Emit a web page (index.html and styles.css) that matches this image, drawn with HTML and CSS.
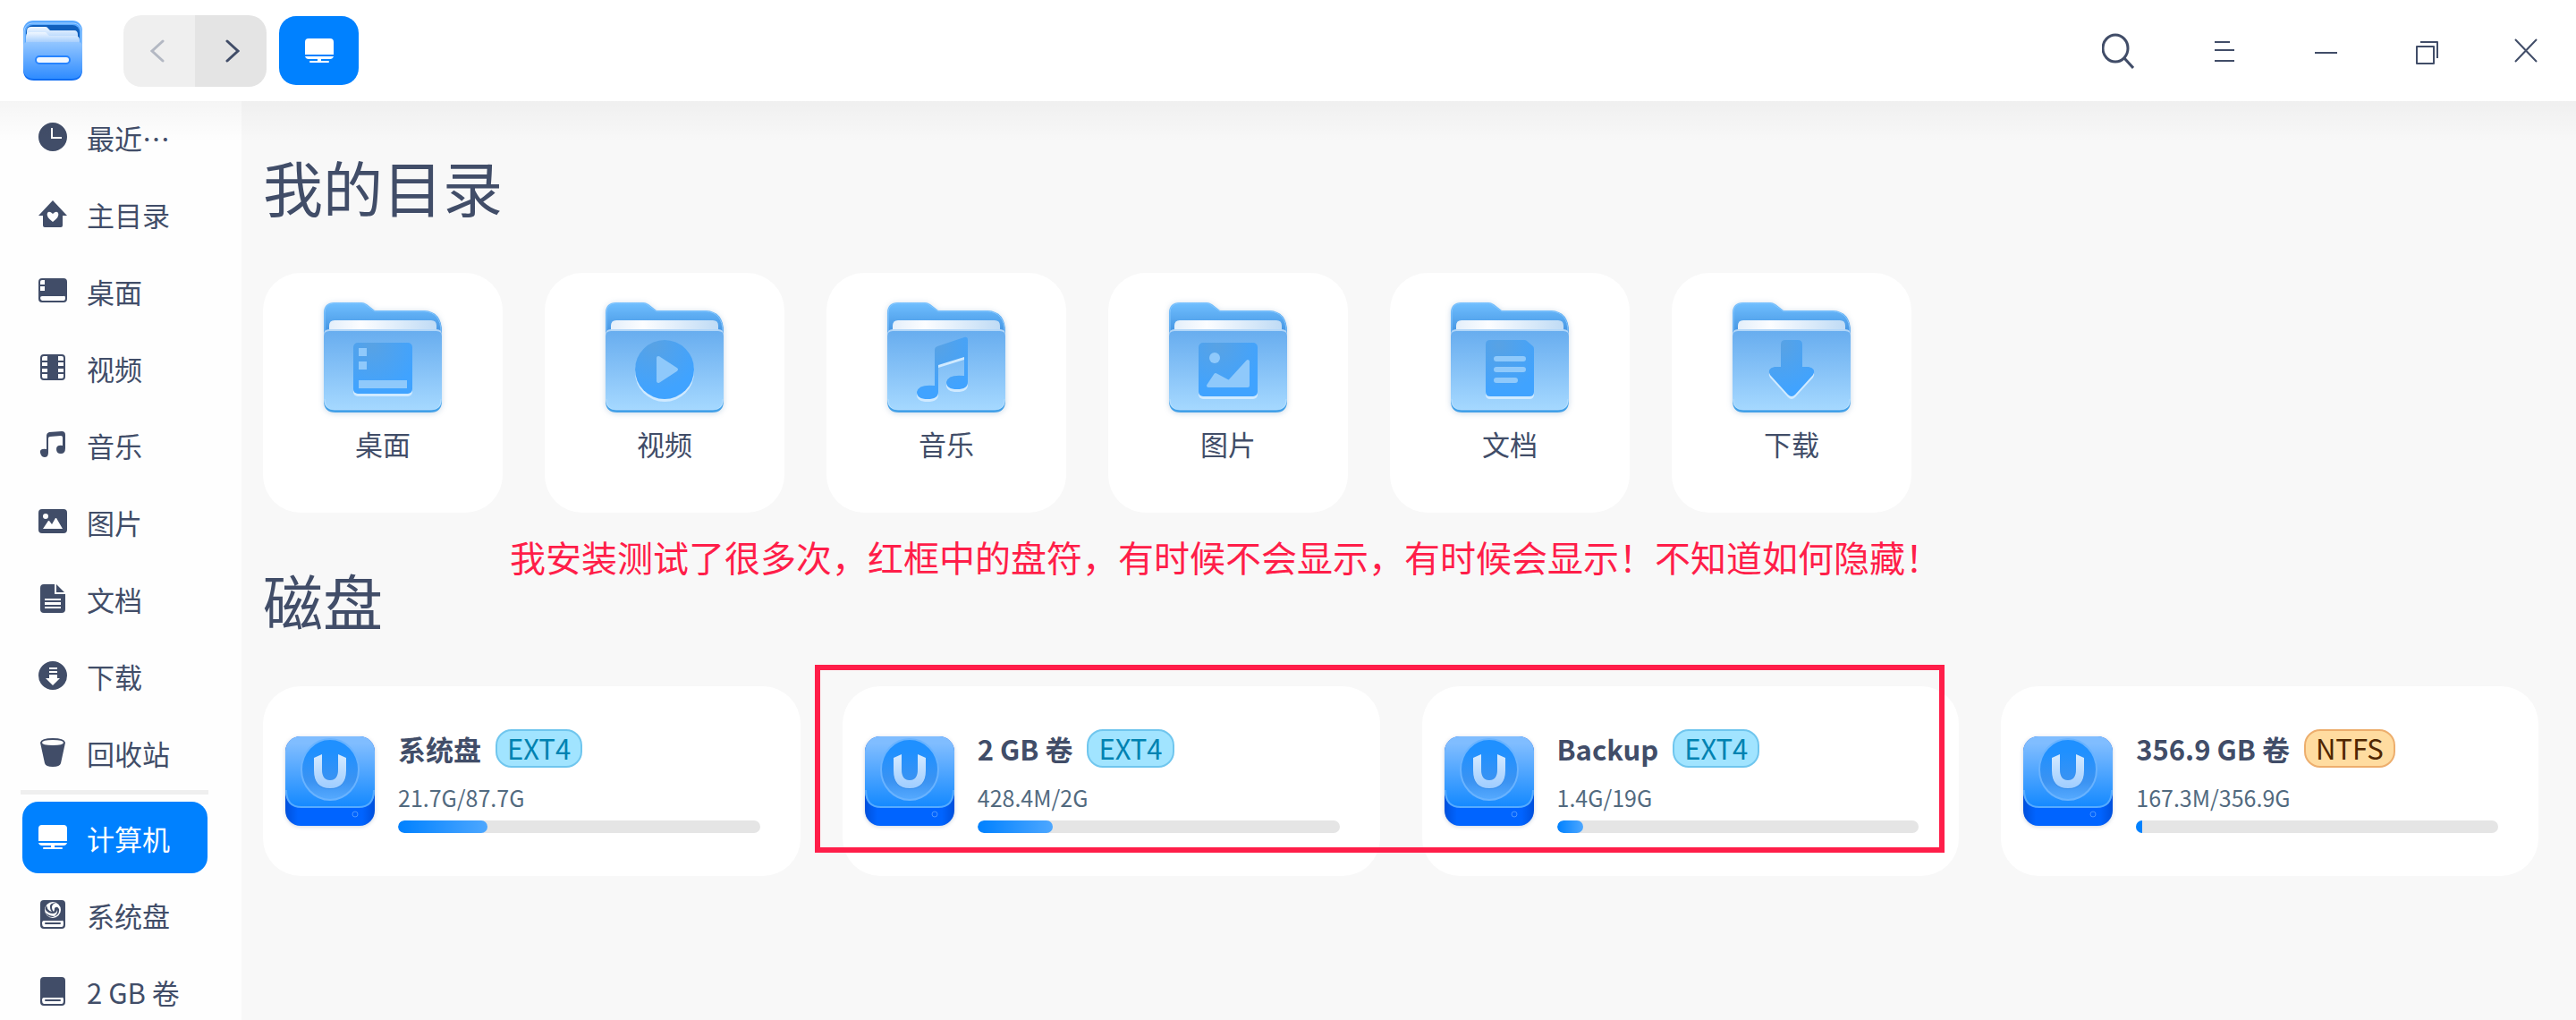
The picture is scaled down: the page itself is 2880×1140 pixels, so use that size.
FILE: index.html
```html
<!DOCTYPE html>
<html lang="zh-CN">
<head>
    <meta charset="UTF-8">
    <meta name="viewport" content="width=device-width, initial-scale=1.0">
    <title>计算机</title>
    <link rel="stylesheet" href="styles.css">
</head>
<body>
    <!-- 公用图形 -->
    <svg class="defs" width="0" height="0" aria-hidden="true">
        <defs>
            <linearGradient id="folder-back" x1="0" y1="0" x2="0" y2="1">
                <stop offset="0" stop-color="#70bfff"/>
                <stop offset="1" stop-color="#3c8cdc"/>
            </linearGradient>
            <linearGradient id="folder-front" x1="0" y1="0" x2="0" y2="1">
                <stop offset="0" stop-color="#68adef"/>
                <stop offset="1" stop-color="#a5d8ff"/>
            </linearGradient>
            <linearGradient id="folder-paper" x1="0" y1="0" x2="1" y2="0">
                <stop offset="0" stop-color="#e4effa"/>
                <stop offset="0.3" stop-color="#fcfdff"/>
                <stop offset="1" stop-color="#bfdbf5"/>
            </linearGradient>
            <radialGradient id="glyph" gradientUnits="userSpaceOnUse" cx="54" cy="48" r="52">
                <stop offset="0" stop-color="#58a2e4"/>
                <stop offset="1" stop-color="#40a3ff"/>
            </radialGradient>
            <linearGradient id="disk-top" x1="0" y1="0" x2="0" y2="1">
                <stop offset="0.1" stop-color="#80bdff"/>
                <stop offset="1" stop-color="#1489ff"/>
            </linearGradient>
            <linearGradient id="disk-base" x1="0" y1="0" x2="1" y2="0">
                <stop offset="0" stop-color="#0050dc"/>
                <stop offset="0.14" stop-color="#0064ff"/>
                <stop offset="0.86" stop-color="#0064ff"/>
                <stop offset="1" stop-color="#0050dc"/>
            </linearGradient>
            <linearGradient id="disk-dial" x1="0" y1="0" x2="0" y2="1">
                <stop offset="0.2" stop-color="#1f90ff"/>
                <stop offset="0.7" stop-color="#3b93f2"/>
                <stop offset="1" stop-color="#56aaff"/>
            </linearGradient>
            <linearGradient id="disk-u" x1="0" y1="0" x2="0" y2="1">
                <stop offset="0" stop-color="#d6eaff"/>
                <stop offset="1" stop-color="#9fcdff"/>
            </linearGradient>
            <linearGradient id="app-front" x1="0" y1="0" x2="0" y2="1">
                <stop offset="0" stop-color="#93c6ff"/>
                <stop offset="1" stop-color="#2f8cff"/>
            </linearGradient>
            <linearGradient id="app-sheet" x1="0" y1="0" x2="0" y2="1">
                <stop offset="0" stop-color="#f0f7ff"/>
                <stop offset="1" stop-color="#7fb9fb"/>
            </linearGradient>
        </defs>
        <symbol id="folder" viewBox="0 0 132 123">
            <path fill="url(#folder-back)" d="M0 40V12Q0 0 12 0H42Q45 0 48 2L57 9H112Q132 10 132 33V40Z"/>
            <path fill="none" stroke="#82c5ff" d="M1 34V12Q1 1 12 1H42Q45 1 47 3L57 10H112Q131 11 131 33"/>
            <path fill="url(#folder-paper)" d="M6 34V26Q6 20 12 20H120Q126 20 126 26V34Z"/>
            <path fill="#42a0e8" d="M0 60H132V110Q132 123 119 123H13Q0 123 0 110Z"/>
            <path fill="#b2d6f8" d="M0 60V36Q0 30 6 30H126Q132 30 132 36V60Z"/>
            <path fill="url(#folder-front)" d="M0 38Q0 32 6 32H126Q132 32 132 38V108Q132 120 120 120H12Q0 120 0 108Z"/>
            <path fill="none" stroke="#c2e4ff" stroke-opacity=".6" d="M1 108Q1 120 12 120H120Q131 120 131 108"/>
        </symbol>
        <symbol id="disk" viewBox="0 0 100 100">
            <rect width="100" height="100" y="0" rx="17" fill="url(#disk-base)"/>
            <rect width="100" height="79" rx="17" fill="url(#disk-top)"/>
            <path d="M1 60Q1 79 18 79H82Q99 79 99 60" fill="none" stroke="#56abff" stroke-width="2"/>
            <ellipse cx="50" cy="37" rx="32" ry="34" fill="url(#disk-dial)" stroke="#69b3ff" stroke-width="2"/>
            <path d="M32 26L41 20V38Q41 49 50 49T59 38V20L68 26V39Q68 59 50 59T32 39Z" fill="#2b7fe0" opacity=".5"/>
            <path d="M32 24L41 20V37Q41 49 50 49T59 37V20L68 24V38Q68 58 50 58T32 38Z" fill="url(#disk-u)"/>
            <circle cx="78" cy="87" r="3" fill="none" stroke="#4c97ff"/>
        </symbol>
        <symbol id="computer" viewBox="0 0 32 32">
            <path fill="currentColor" d="M4 2H28Q32 2 32 6V20H0V6Q0 2 4 2ZM0 22H32Q31 25 28 25H4Q1 25 0 22ZM14 25H18V27H26Q27 27 27 28T26 29H6Q5 29 5 28T6 27H14Z"/>
        </symbol>
    </svg>

    <header class="titlebar">
        <svg class="app-logo" viewBox="0 0 66 67" aria-hidden="true">
            <rect width="66" height="60" rx="11" fill="#58a8ff"/>
            <rect x="1" y="3" width="64" height="40" rx="9" fill="none" stroke="#a3d0ff"/>
            <rect x="3" y="5" width="60" height="40" rx="8" fill="#1160bd"/>
            <path fill="url(#app-sheet)" d="M4 30V12Q4 7 9 7H25Q27 7 28 9L30 11H57Q61 11 61 16V30Z"/>
            <path fill="url(#app-sheet)" d="M3 30V18Q3 13 8 13H24Q26 13 27 15L29 17H58Q63 17 63 22V30Z"/>
            <path fill="#0e6cf2" d="M0 40H66V55Q66 67 54 67H12Q0 67 0 55Z"/>
            <path fill="url(#app-front)" d="M0 29Q0 24 5 24H61Q66 24 66 29V53Q66 65 54 65H12Q0 65 0 53Z"/>
            <rect x="14" y="40" width="38" height="8" rx="4" fill="#f2f8ff" stroke="#2784ff" stroke-width="2"/>
        </svg>
        <div class="history">
            <button type="button" class="history-btn" aria-label="后退" disabled>
                <svg width="26" height="26" viewBox="0 0 26 26"><path d="M17 2L5 13L17 24"/></svg>
            </button>
            <button type="button" class="history-btn forward" aria-label="前进">
                <svg width="26" height="26" viewBox="0 0 26 26"><path d="M9 2L21 13L9 24"/></svg>
            </button>
        </div>
        <button type="button" class="place-btn" aria-label="计算机">
            <svg width="32" height="32"><use href="#computer"/></svg>
        </button>
        <div class="window-tools">
            <button type="button" class="tool search" aria-label="搜索">
                <svg width="36" height="40" viewBox="0 0 36 40"><ellipse cx="15" cy="17" rx="14" ry="15"/><path d="M25 28L35 39"/></svg>
            </button>
            <button type="button" class="tool" aria-label="菜单">
                <svg width="36" height="36" viewBox="0 0 36 36"><path d="M6 8H23M6 17H28M6 29H28"/></svg>
            </button>
            <button type="button" class="tool" aria-label="最小化">
                <svg width="36" height="36" viewBox="0 0 36 36"><path d="M6 20H31"/></svg>
            </button>
            <button type="button" class="tool" aria-label="还原">
                <svg width="36" height="36" viewBox="0 0 36 36"><path d="M8 13H27V32H8ZM12 8H31V26"/></svg>
            </button>
            <button type="button" class="tool" aria-label="关闭">
                <svg width="36" height="36" viewBox="0 0 36 36"><path d="M6 5L30 30M30 5L6 30"/></svg>
            </button>
        </div>
    </header>

    <div class="layout">
        <nav class="sidebar">
            <a class="side-item" href="#">
                <svg class="side-icon" viewBox="0 0 32 32"><path fill-rule="evenodd" d="M16 0A16 16 0 1 0 16 32A16 16 0 1 0 16 0ZM14 6H16V16H26V18H14Z"/></svg>
                <span>最近…</span>
            </a>
            <a class="side-item" href="#">
                <svg class="side-icon" viewBox="0 0 32 32"><path fill-rule="evenodd" d="M16 1L32 18H27V29Q27 31 25 31H7Q5 31 5 29V18H0ZM16 16Q12 12 10 15Q8 19 16 25Q24 19 22 15Q20 12 16 16Z"/></svg>
                <span>主目录</span>
            </a>
            <a class="side-item" href="#">
                <svg class="side-icon" viewBox="0 0 32 32"><path fill-rule="evenodd" d="M4 2H28Q32 2 32 6V25Q32 29 28 29H4Q0 29 0 25V6Q0 2 4 2ZM4 4Q2 4 2 6V9H7V4ZM2 11V16H7V11ZM4 22Q2 22 2 24T4 27H28Q30 27 30 24T28 22Z"/></svg>
                <span>桌面</span>
            </a>
            <a class="side-item" href="#">
                <svg class="side-icon" viewBox="0 0 32 32"><path fill-rule="evenodd" d="M6 1H26Q30 1 30 5V26Q30 30 26 30H6Q2 30 2 26V5Q2 1 6 1ZM6 3Q4 3 4 5V8H10V3ZM22 3V8H28V5Q28 3 26 3ZM4 10V14H10V10ZM22 10V14H28V10ZM4 17V21H10V17ZM22 17V21H28V17ZM4 23V26Q4 28 6 28H10V23ZM22 23V28H26Q28 28 28 26V23Z"/></svg>
                <span>视频</span>
            </a>
            <a class="side-item" href="#">
                <svg class="side-icon" viewBox="0 0 32 32"><path d="M9 6Q9 3 12 2L26 1Q30 1 30 5V20Q30 26 25 26T20 21T27 17V8Q27 6 25 6L13 7Q11 7 11 9V25Q11 30 7 30T2 25T9 21Z"/></svg>
                <span>音乐</span>
            </a>
            <a class="side-item" href="#">
                <svg class="side-icon" viewBox="0 0 32 32"><path fill-rule="evenodd" d="M4 2H28Q32 2 32 6V25Q32 29 28 29H4Q0 29 0 25V6Q0 2 4 2ZM8 7A3 3 0 1 0 8 13A3 3 0 1 0 8 7ZM5 24L11 15L12 15L15 19L19 12H20L27 24Z"/></svg>
                <span>图片</span>
            </a>
            <a class="side-item" href="#">
                <svg class="side-icon" viewBox="0 0 32 32"><path fill-rule="evenodd" d="M6 0H18V11H30V28Q30 32 26 32H6Q2 32 2 28V4Q2 0 6 0ZM20 0L29 9H20ZM7 16V18H25V16ZM7 20V23H25V20ZM7 25V27H25V25Z"/></svg>
                <span>文档</span>
            </a>
            <a class="side-item" href="#">
                <svg class="side-icon" viewBox="0 0 32 32"><path fill-rule="evenodd" d="M16 0A16 16 0 1 0 16 32A16 16 0 1 0 16 0ZM12 7H21V9H12ZM12 11H21V13H12ZM12 15H21V19H24L16 27L8 19H12Z"/></svg>
                <span>下载</span>
            </a>
            <a class="side-item" href="#">
                <svg class="side-icon" viewBox="0 0 32 32"><path fill-rule="evenodd" d="M2 5Q3 0 16 0T30 5L25 28Q24 32 16 32T7 28ZM16 2Q4 2 4 5T16 8T28 5T16 2Z"/></svg>
                <span>回收站</span>
            </a>
            <hr class="side-line">
            <a class="side-item active" href="#" aria-current="page">
                <svg class="side-icon" viewBox="0 0 32 32"><use href="#computer"/></svg>
                <span>计算机</span>
            </a>
            <a class="side-item" href="#">
                <svg class="side-icon" viewBox="0 0 32 32">
                    <path fill-rule="evenodd" d="M6 0H26Q30 0 30 4V28Q30 32 26 32H6Q2 32 2 28V4Q2 0 6 0ZM6 23Q4 23 4 26T6 30H26Q28 30 28 26T26 23ZM8 25H24Q25 25 25 26T24 27H8Q7 27 7 26T8 25ZM16 2A9 9 0 1 0 16 20A9 9 0 1 0 16 2Z"/>
                    <path d="M20 3Q12 3 13 8Q13 11 15 13Q10 12 9 6Q7 9 8 11Q11 15 16 15Q20 15 21 11Q22 15 18 18Q12 18 8 14Q10 19 16 19Q24 17 23 10Q21 6 18 9Q18 12 17 13Q15 11 15 8Q15 4 20 3Z"/>
                </svg>
                <span>系统盘</span>
            </a>
            <a class="side-item" href="#">
                <svg class="side-icon" viewBox="0 0 32 32"><path fill-rule="evenodd" d="M6 0H26Q30 0 30 4V28Q30 32 26 32H6Q2 32 2 28V4Q2 0 6 0ZM6 23Q4 23 4 26T6 30H26Q28 30 28 26T26 23ZM8 25H24Q25 25 25 26T24 27H8Q7 27 7 26T8 25Z"/></svg>
                <span>2 GB 卷</span>
            </a>
        </nav>

        <main class="content">
            <section class="section">
                <h2 class="section-title">我的目录</h2>
                <div class="folder-list">
                    <button type="button" class="folder-card">
                        <svg class="folder-icon" viewBox="0 0 132 123">
                            <use href="#folder"/>
                            <rect x="33" y="48" width="66" height="57" rx="5" fill="#d0eaff"/>
                            <rect x="33" y="45" width="66" height="57" rx="5" fill="url(#glyph)"/>
                            <path fill="#8fc9fb" d="M39 51h9v9h-9zM39 66h9v9h-9zM39 87h54v9h-54z"/>
                        </svg>
                        <span>桌面</span>
                    </button>
                    <button type="button" class="folder-card">
                        <svg class="folder-icon" viewBox="0 0 132 123">
                            <use href="#folder"/>
                            <circle cx="66" cy="78" r="33" fill="#d0eaff"/>
                            <circle cx="66" cy="75" r="33" fill="url(#glyph)"/>
                            <path d="M59 62L79 75L59 88Z" fill="#8fc9fb" stroke="#8fc9fb" stroke-width="4" stroke-linejoin="round"/>
                        </svg>
                        <span>视频</span>
                    </button>
                    <button type="button" class="folder-card">
                        <svg class="folder-icon" viewBox="0 0 132 123">
                            <use href="#folder"/>
                            <path transform="translate(0 3)" fill="#d0eaff" d="M53 53Q53 50 56 49L86 39Q90 38 90 42V89Q90 97 78 97T66 89Q68 80 86 82V61L57 70V100Q57 108 45 108T33 100Q35 91 53 93Z"/>
                            <path fill="url(#glyph)" d="M53 53Q53 50 56 49L86 39Q90 38 90 42V89Q90 97 78 97T66 89Q68 80 86 82V61L57 70V100Q57 108 45 108T33 100Q35 91 53 93Z"/>
                        </svg>
                        <span>音乐</span>
                    </button>
                    <button type="button" class="folder-card">
                        <svg class="folder-icon" viewBox="0 0 132 123">
                            <use href="#folder"/>
                            <rect x="33" y="48" width="66" height="60" rx="5" fill="#d0eaff"/>
                            <rect x="33" y="45" width="66" height="60" rx="5" fill="url(#glyph)"/>
                            <circle cx="51" cy="62" r="6" fill="#8fc9fb"/>
                            <path d="M44 93L52 81L67 89L88 66V93Z" fill="#8fc9fb" stroke="#8fc9fb" stroke-width="4" stroke-linejoin="round"/>
                        </svg>
                        <span>图片</span>
                    </button>
                    <button type="button" class="folder-card">
                        <svg class="folder-icon" viewBox="0 0 132 123">
                            <use href="#folder"/>
                            <path fill="#d0eaff" d="M39 60H93V103Q93 108 88 108H44Q39 108 39 103Z"/>
                            <path fill="url(#glyph)" d="M44 42H82Q84 42 85 43L92 49Q93 50 93 52V100Q93 105 88 105H44Q39 105 39 100V47Q39 42 44 42Z"/>
                            <path d="M51 63H81M51 75H81M51 87H72" stroke="#8fc9fb" stroke-width="6" stroke-linecap="round"/>
                        </svg>
                        <span>文档</span>
                    </button>
                    <button type="button" class="folder-card">
                        <svg class="folder-icon" viewBox="0 0 132 123">
                            <use href="#folder"/>
                            <path transform="translate(0 3)" fill="#d0eaff" d="M47 72H85Q94 74 90 81L70 103Q66 107 62 103L42 81Q38 74 47 72Z"/>
                            <path fill="url(#glyph)" d="M54 72V47Q54 42 59 42H73Q78 42 78 47V72H85Q94 74 90 81L70 103Q66 107 62 103L42 81Q38 74 47 72Z"/>
                        </svg>
                        <span>下载</span>
                    </button>
                </div>
            </section>

            <section class="section">
                <p class="note">我安装测试了很多次，红框中的盘符，有时候不会显示，有时候会显示！不知道如何隐藏！</p>
                <h2 class="section-title">磁盘</h2>
                <div class="disk-list">
                    <article class="disk-card">
                        <svg class="disk-icon"><use href="#disk"/></svg>
                        <div class="disk-info">
                            <div class="disk-head"><h3 class="disk-name">系统盘</h3><span class="tag">EXT4</span></div>
                            <p class="disk-size">21.7G/87.7G</p>
                            <div class="bar"><div class="bar-fill" style="width: 24.6%"></div></div>
                        </div>
                    </article>
                    <article class="disk-card">
                        <svg class="disk-icon"><use href="#disk"/></svg>
                        <div class="disk-info">
                            <div class="disk-head"><h3 class="disk-name">2 GB 卷</h3><span class="tag">EXT4</span></div>
                            <p class="disk-size">428.4M/2G</p>
                            <div class="bar"><div class="bar-fill" style="width: 20.7%"></div></div>
                        </div>
                    </article>
                    <article class="disk-card">
                        <svg class="disk-icon"><use href="#disk"/></svg>
                        <div class="disk-info">
                            <div class="disk-head"><h3 class="disk-name">Backup</h3><span class="tag">EXT4</span></div>
                            <p class="disk-size">1.4G/19G</p>
                            <div class="bar"><div class="bar-fill" style="width: 7.4%"></div></div>
                        </div>
                    </article>
                    <article class="disk-card">
                        <svg class="disk-icon"><use href="#disk"/></svg>
                        <div class="disk-info">
                            <div class="disk-head"><h3 class="disk-name">356.9 GB 卷</h3><span class="tag tag-ntfs">NTFS</span></div>
                            <p class="disk-size">167.3M/356.9G</p>
                            <div class="bar"><div class="bar-fill tiny" style="width: 1.7%"></div></div>
                        </div>
                    </article>
                    <!-- 红框：圈出第二、三个盘 -->
                    <div class="mark"></div>
                </div>
            </section>
        </main>
    </div>
</body>
</html>
```

FILE: styles.css
```css
* {
    box-sizing: border-box;
}
body {
    margin: 0;
    height: 100vh;
    display: flex;
    flex-direction: column;
    overflow: hidden;
    font-family: "Noto Sans CJK SC", sans-serif;
    font-size: 31px;
    color: #414d68;
    background: #fff;
}
button {
    font: inherit;
    color: inherit;
    border: none;
    padding: 0;
    cursor: pointer;
}
h2, h3, p {
    margin: 0;
}
.defs {
    position: absolute;
}

/* 标题栏 */
.titlebar {
    position: relative;
    display: flex;
    align-items: center;
    flex: none;
    height: 113px;
    padding-left: 26px;
    background: #fff;
}
.titlebar::after {
    content: "";
    position: absolute;
    top: 100%;
    left: 0;
    right: 0;
    height: 46px;
    background: linear-gradient(rgba(0, 0, 0, 0.035), rgba(0, 0, 0, 0));
    pointer-events: none;
    z-index: 1;
}
.app-logo {
    width: 66px;
    height: 67px;
    margin-right: 46px;
}
.history {
    display: flex;
    width: 160px;
    height: 80px;
    margin-right: 14px;
    border-radius: 20px;
    overflow: hidden;
}
.history-btn {
    flex: 1;
    display: flex;
    align-items: center;
    justify-content: center;
    background: #efefef;
}
.history-btn svg {
    fill: none;
    stroke: #414d68;
    stroke-width: 3;
    stroke-linecap: round;
}
.history-btn:disabled svg {
    stroke: #b3b8c3;
}
.history-btn.forward {
    background: #e4e4e4;
}
.place-btn {
    display: flex;
    align-items: center;
    justify-content: center;
    width: 89px;
    height: 77px;
    border-radius: 19px;
    color: #fff;
    background: #0081ff;
}
.window-tools {
    display: flex;
    margin-left: auto;
}
.tool {
    display: flex;
    align-items: center;
    justify-content: center;
    width: 112px;
    height: 80px;
    background: none;
}
.tool svg {
    fill: none;
    stroke: #414d68;
    stroke-width: 2;
    stroke-linejoin: round;
}
.tool.search {
    margin-right: 8px;
}
.tool.search svg {
    stroke-width: 3;
}

.layout {
    display: flex;
    flex: 1;
    min-height: 0;
}

/* 侧边栏 */
.sidebar {
    display: flex;
    flex-direction: column;
    flex: none;
    gap: 6px;
    width: 270px;
    padding: 0 38px 0 25px;
    background: #fefefe;
}
.side-item {
    display: flex;
    align-items: center;
    flex: none;
    gap: 22px;
    height: 80px;
    padding-left: 18px;
    border-radius: 18px;
    color: #414d68;
    text-decoration: none;
    white-space: nowrap;
}
.side-item.active {
    color: #fff;
    background: #0081ff;
}
.side-icon {
    width: 32px;
    height: 32px;
    fill: currentColor;
}
.side-line {
    flex: none;
    width: 210px;
    height: 5px;
    margin: -4px 0 2px -2px;
    border: none;
    background: #efefef;
}

/* 内容区 */
.content {
    flex: 1;
    padding: 45px 42px 0 24px;
    background: #f8f8f8;
}
.section {
    position: relative;
    margin-bottom: 47px;
}
.section-title {
    margin-bottom: 47px;
    font-size: 67px;
    font-weight: 400;
    line-height: 100px;
}
.folder-list {
    display: flex;
    flex-wrap: wrap;
    gap: 47px;
}
.folder-card {
    display: flex;
    flex-direction: column;
    align-items: center;
    gap: 12px;
    width: 268px;
    height: 268px;
    padding-top: 33px;
    border-radius: 42px;
    line-height: 46px;
    background: #fff;
}
.folder-icon {
    width: 132px;
    height: 123px;
    filter: drop-shadow(0 1px 3px rgba(40, 100, 160, 0.25));
}

.disk-list {
    position: relative;
    display: grid;
    grid-template-columns: repeat(4, 1fr);
    gap: 47px;
}
.disk-card {
    display: flex;
    align-items: center;
    gap: 26px;
    height: 212px;
    padding: 0 45px 0 25px;
    border-radius: 42px;
    background: #fff;
}
.disk-icon {
    flex: none;
    width: 100px;
    height: 100px;
    filter: drop-shadow(0 1px 2px rgba(0, 40, 100, 0.2));
}
.disk-info {
    flex: 1;
}
.disk-head {
    display: flex;
    align-items: center;
    gap: 16px;
}
.disk-name {
    font-size: 31px;
    font-weight: 700;
    line-height: 43px;
}
.tag {
    height: 43px;
    padding: 0 11px;
    border: 2px solid #70c6ee;
    border-radius: 18px;
    line-height: 38px;
    color: #0082b1;
    background: #a1e4ff;
}
.tag-ntfs {
    border-color: #edae6d;
    color: #502600;
    background: #ffdca0;
}
.disk-size {
    margin: 15px 0 7px;
    font-size: 25px;
    line-height: 37px;
    color: #526a7f;
}
.bar {
    height: 14px;
    border-radius: 7px;
    background: #e5e5e5;
    overflow: hidden;
}
.bar-fill {
    height: 100%;
    border-radius: 7px;
    background: linear-gradient(90deg, #0081ff, #4da7ff);
}
.bar-fill.tiny {
    border-radius: 0;
    background: #0081ff;
}

/* 红色标注 */
.note {
    position: absolute;
    top: -27px;
    left: 276px;
    font-size: 40px;
    line-height: 58px;
    white-space: nowrap;
    color: #ff1e49;
}
.mark {
    position: absolute;
    grid-column: 2 / 4;
    top: -24px;
    bottom: 26px;
    left: -31px;
    right: 16px;
    border: 6px solid #ff1e49;
}
```
